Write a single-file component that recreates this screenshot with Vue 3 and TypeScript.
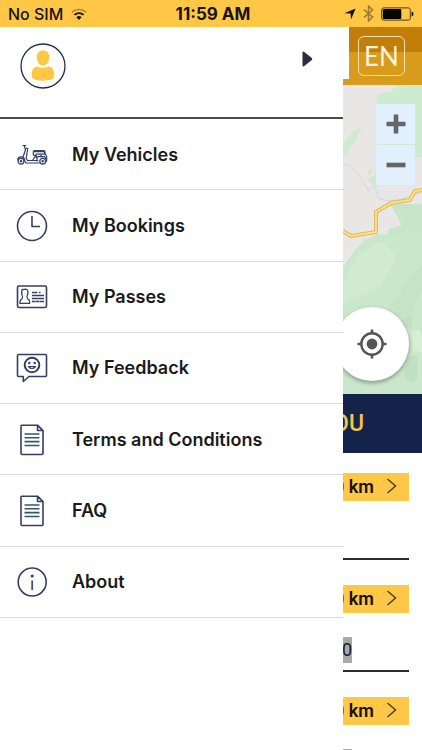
<script setup lang="ts">
type IconName = 'scooter' | 'clock' | 'pass' | 'feedback' | 'document' | 'info'

interface MenuItem {
  label: string
  icon: IconName
}

interface Place {
  distance: string
  count?: string
}

const menu: MenuItem[] = [
  { label: 'My Vehicles', icon: 'scooter' },
  { label: 'My Bookings', icon: 'clock' },
  { label: 'My Passes', icon: 'pass' },
  { label: 'My Feedback', icon: 'feedback' },
  { label: 'Terms and Conditions', icon: 'document' },
  { label: 'FAQ', icon: 'document' },
  { label: 'About', icon: 'info' },
]

const places: Place[] = [
  { distance: '0 km' },
  { distance: '0 km', count: '0' },
  { distance: '0 km', count: '0' },
]
</script>

<template>
  <div class="screen">
    <div class="status">
      <div class="status-side">
        <span class="carrier">No SIM</span>
        <svg class="wifi" viewBox="0 0 16 12" aria-hidden="true">
          <path d="M1 4.2a10.4 10.4 0 0 1 14 0" fill="none" stroke="#a98532" stroke-width="1.7" />
          <path d="M3.4 6.9a6.8 6.8 0 0 1 9.2 0" fill="none" stroke="#17130a" stroke-width="1.9" />
          <path d="M8 12 5.4 9.2a3.9 3.9 0 0 1 5.2 0z" fill="#17130a" />
        </svg>
      </div>
      <span class="time">11:59 AM</span>
      <div class="status-side status-right">
        <svg width="12" height="12" viewBox="0 0 12 12" aria-hidden="true">
          <path d="M11.6.4 7 11.4 6.6 5.6.4 5.2z" fill="#17130a" />
        </svg>
        <svg width="11" height="17" viewBox="0 0 11 17" aria-hidden="true">
          <path d="M1 4.6 9.6 12 5.5 16V1l4.1 4L1 12.4" fill="none" stroke="#9b7a2d" stroke-width="1.5" />
        </svg>
        <svg width="33" height="14" viewBox="0 0 33 14" aria-hidden="true">
          <rect x=".7" y=".9" width="28.6" height="12.2" rx="2" fill="none" stroke="#4a3a15" stroke-width="1" />
          <rect x="1.8" y="2" width="18.5" height="10" rx="1" fill="#080603" />
          <path d="M30.6 4.6q2 .5 2 2.4t-2 2.4z" fill="#17130a" />
        </svg>
      </div>
    </div>

    <div class="stage">
      <main class="page">
        <header class="topbar">
          <button class="lang" type="button">EN</button>
        </header>

        <section class="map" aria-label="Map">
          <svg class="map-art" viewBox="0 0 422 309" preserveAspectRatio="xMaxYMin slice" aria-hidden="true">
            <rect width="422" height="309" fill="#e9e7e5" />
            <path d="M376 16l4-8 10-1 8-7h24v101h-36l-14-6-5-8 9-7 1-16 10-14-2-13z" fill="#cdebd0" />
            <path d="M343 71v-13l11-12 8-4-7 13-9 16z" fill="#cfead1" />
            <path d="M376 76l46-4v60l-38-4-30 2-8-30 22-6z" fill="#e9e7e5" />
            <path d="M367 94l8-4 2-14 8 2 2 16-10 8z" fill="#cfe9d0" />
            <path d="M391 119h31v45h-26l-9-14 4-16z" fill="#c8e4c9" />
            <path d="M343 181l20-27 14-5 18 1 27-6v165h-79z" fill="#cae7cb" />
            <path d="M357 170l24-14 16 16-16 29-38 18v-20z" fill="#d0ebd1" />
            <path d="M396 212l26-34v26l-23 47-26-12z" fill="#c5e3c7" />
            <path d="M402 236q9-8 10-3v11l-10-2zM407 274q9-7 10 0v20q-9 8-13-4z" fill="#c1dfc3" />
            <path d="M412 247q9-5 10 4v17l-9-3zM345 252l14-11-2 22z" fill="#d5eed5" />
            <path d="M371 145l18-1 13-4-10-18-16 5z" fill="#e9e7e5" />
            <path d="M343 180q9-16 24-27l22-10" fill="none" stroke="#efeeee" stroke-width="1" />
            <path d="M343 80h6l8 7 10 16 2 3 5-6 5 14q14 4 28-2l15-5" fill="none" stroke="#c7dae5" stroke-width="1" />
            <path d="M343 146l8 5 25-4v-20l15-9 19-3 5-9 7-1" fill="none" stroke="#e5b85a" stroke-width="4" stroke-linejoin="round" />
            <path d="M343 146l8 5 25-4v-20l15-9 19-3 5-9 7-1" fill="none" stroke="#fbe184" stroke-width="2" stroke-linejoin="round" />
          </svg>
          <div class="map-controls">
            <div class="zoom">
              <button type="button" aria-label="Zoom in">
                <svg width="20" height="20" viewBox="0 0 20 20"><path d="M10 .5v19M.5 10h19" stroke="#646566" stroke-width="4.6" /></svg>
              </button>
              <button type="button" aria-label="Zoom out">
                <svg width="20" height="20" viewBox="0 0 20 20"><path d="M.5 10h19" stroke="#646566" stroke-width="4.6" /></svg>
              </button>
            </div>
            <button class="locate" type="button" aria-label="My location">
              <svg width="30" height="30" viewBox="0 0 30 30">
                <circle cx="15" cy="15" r="10.7" fill="none" stroke="#555" stroke-width="2.4" />
                <circle cx="15" cy="15" r="5.4" fill="#555" />
                <path d="M15 .5v4M15 25.5v4M.5 15h4M25.5 15h4" stroke="#555" stroke-width="2.6" />
              </svg>
            </button>
          </div>
        </section>

        <h2 class="banner">OU</h2>

        <ul class="places">
          <li v-for="(place, i) in places" :key="i" class="place">
            <a class="distance" href="#">
              {{ place.distance }}
              <svg width="11" height="16" viewBox="0 0 11 16" aria-hidden="true">
                <path d="M1.5 1l8 7-8 7" fill="none" stroke="#4b3d17" stroke-width="1.5" />
              </svg>
            </a>
            <span v-if="place.count" class="count">{{ place.count }}</span>
          </li>
        </ul>
      </main>

      <aside class="drawer">
        <div class="profile">
          <svg class="avatar" viewBox="0 0 46 46" aria-hidden="true">
            <circle cx="23" cy="23" r="22" fill="#fff" stroke="#252b50" stroke-width="1.3" />
            <path d="M23 7.5c4 0 6.200 2.700 6.200 6.800 0 4.400-2.300 8.200-6.200 8.200s-6.200-3.800-6.200-8.200c0-4.100 2.200-6.800 6.200-6.800z" fill="#fec744" />
            <path d="M17.500 23.200c3 2.300 8 2.300 11 0 4 .8 5.800 4 5.800 8.300 0 2.300-.5 3.700-1.700 4.500-3.800 2.200-15.400 2.200-19.200 0-1.200-.8-1.700-2.200-1.700-4.500 0-4.300 1.800-7.500 5.800-8.300z" fill="#fec744" />
          </svg>
          <button class="expand" type="button" aria-label="Open profile">
            <svg width="11" height="16" viewBox="0 0 11 16">
              <path d="M.5 1.5Q.5 0 2 .8L9.800 7q1 1 0 2L2 15.200Q.5 16 .5 14.500z" fill="#2b2d40" />
            </svg>
          </button>
        </div>

        <nav class="menu">
          <a v-for="item in menu" :key="item.label" class="menu-item" href="#">
            <svg class="icon" viewBox="0 0 32 32" aria-hidden="true">
              <g v-if="item.icon === 'scooter'" stroke-width="1.2">
                <path d="M6.500 6.500h3.600M8.200 6.500l1.300 4.200-2.700 8.100" />
                <path d="M9.700 9l2 .6-1.500 9.700 1.300 2.200h5l3-4.800-2.200-.8V12.700h11.400v2.500h-8.600v3.100l2.500-.7h6l2.200 3.400-.8 2" />
                <path d="M7.500 19.500l2.500 4.500h13.700M1.700 21.500q-.3-4 4.300-3.700 2.200.5 3 3M17.500 11.700h10.600l1.300 1.800" />
                <path d="M24.500 15.500l1 2M21 18v4.500M28 12.500l2.700 5v3M16.800 21.500h5.500" />
                <circle cx="5" cy="22.3" r="2.9" /><circle cx="26.7" cy="22.3" r="2.9" />
                <circle cx="5" cy="22.3" r=".7" /><circle cx="26.7" cy="22.3" r=".7" />
              </g>
              <g v-else-if="item.icon === 'clock'">
                <circle cx="16" cy="16" r="14.5" />
                <path d="M16 6v10.500h8" />
              </g>
              <g v-else-if="item.icon === 'pass'">
                <rect x="1.5" y="5" width="29" height="21.5" rx="1.5" />
                <path d="M6 9.500q-.4-1.500 1-.8 4.500-1.500 5 1.800.2 1.800-.8 4-1 2 .5 3.300 2 .8 2 3.500v1H3.900v-1q0-2.700 2.100-3.500 1.300-1.300.2-3.300-1-3-.2-5z" stroke-width="1.3" />
                <path d="M16 11.500h5.500M23 11.500h1.500M16 14.500h12M16 17.500h12M16 20.500h12" stroke-width="1.3" />
                <path d="M19.500 20.500h.6M23.500 20.500h.6" stroke="#fff" />
              </g>
              <g v-else-if="item.icon === 'feedback'">
                <path d="M2.500 2.500h27q1 0 1 1v20q0 1-1 1H13l-5.700 5v-5H2.500q-1 0-1-1v-20q0-1 1-1z" />
                <circle cx="16" cy="13" r="7.3" stroke-width="2" />
                <circle cx="13.3" cy="11" r=".5" /><circle cx="18.7" cy="11" r=".5" />
                <path d="M12.500 14.500q3.500 4 7 0z" stroke-width="1.2" />
              </g>
              <g v-else-if="item.icon === 'document'">
                <path d="M5.500 1.300h16.300l5.200 5.200v23q0 1-1 1H6q-1 0-1-1V2.300q0-1 .5-1zM21.500 1.500v5h5.300z" />
                <path d="M8.500 10h15M8.500 13.800h15M8.500 17.600h15M8.500 21.500h15" stroke="#36566f" />
              </g>
              <g v-else>
                <circle cx="16.2" cy="16" r="14" />
                <path d="M16.200 14.500V24" stroke="#3d5272" stroke-width="1.8" />
                <circle cx="16.2" cy="10" r=".8" />
              </g>
            </svg>
            <span>{{ item.label }}</span>
          </a>
        </nav>
      </aside>
    </div>
  </div>
</template>

<style>
body {
  margin: 0;
  background: #fff;
}
</style>

<style scoped>
.screen {
  display: flex;
  flex-direction: column;
  height: 100vh;
  overflow: hidden;
  background: #fff;
  color: #1a1a1c;
  font-family: Inter, Roboto, "Liberation Sans", sans-serif;
}

button {
  margin: 0;
  padding: 0;
  border: 0;
  cursor: pointer;
}

a {
  color: inherit;
  text-decoration: none;
}

svg {
  display: block;
  flex: none;
}

.status {
  display: grid;
  grid-template-columns: 1fr auto 1fr;
  align-items: center;
  flex: none;
  box-sizing: border-box;
  height: 27px;
  padding: 0 8px;
  background: #fec846;
  color: #17130a;
  font-size: 16px;
  line-height: 20px;
}

.status-side {
  display: flex;
  align-items: center;
  gap: 8px;
}

.carrier {
  font-weight: 500;
}

.wifi {
  width: 16px;
  height: 12px;
}

.status-right {
  gap: 7px;
  justify-content: flex-end;
}

.time {
  padding-left: 4px;
  font-size: 17px;
  font-weight: 700;
}

.stage {
  position: relative;
  flex: 1;
  min-height: 0;
}

.topbar {
  display: flex;
  align-items: center;
  justify-content: flex-end;
  box-sizing: border-box;
  height: 58px;
  padding-right: 17px;
  background: linear-gradient(#c17e08 0 25px, #d89b1b 25px);
}

.lang {
  width: 47px;
  height: 40px;
  border: 1px solid #f2dfb4;
  border-radius: 6px;
  background: transparent;
  color: #fbf3df;
  font-family: Lato, sans-serif;
  font-size: 26px;
  font-weight: 400;
  line-height: 36px;
}

.map {
  display: grid;
  height: 309px;
}

.map-art {
  grid-area: 1 / 1;
  width: 100%;
  height: 309px;
}

.map-controls {
  display: flex;
  flex-direction: column;
  align-items: flex-end;
  justify-content: space-between;
  grid-area: 1 / 1;
  padding: 19px 0 13px;
}

.zoom {
  display: grid;
  gap: 1px;
  margin-right: 7px;
}

.zoom button {
  display: grid;
  place-items: center;
  width: 39px;
  height: 40px;
  background: #e2effc;
}

.locate {
  display: grid;
  place-items: center;
  width: 74px;
  height: 74px;
  margin-right: 13px;
  border-radius: 50%;
  background: #fff;
  box-shadow: 0 2px 4px rgba(0, 0, 0, 0.35);
}

.banner {
  box-sizing: border-box;
  height: 59px;
  margin: 0;
  padding-right: 58px;
  background: #14234a;
  color: #f5c44b;
  font-family: Roboto, sans-serif;
  font-size: 23px;
  font-weight: 500;
  line-height: 60px;
  text-align: right;
}

.places {
  margin: 0;
  padding: 20px 13px 0;
  list-style: none;
}

.place {
  display: flex;
  flex-direction: column;
  align-items: flex-end;
  gap: 24px;
  box-sizing: border-box;
  height: 87px;
  margin-bottom: 25px;
  border-bottom: 2px solid #2b2b2b;
}

.distance {
  display: flex;
  align-items: center;
  gap: 12px;
  box-sizing: border-box;
  height: 28px;
  padding: 0 12px 2px;
  background: #fec846;
  color: #17130a;
  font-family: Roboto, sans-serif;
  font-size: 18px;
  font-weight: 600;
}

.count {
  margin-right: 57px;
  padding-left: 8px;
  background: #a9a9a9;
  font-family: Roboto, sans-serif;
  font-size: 18px;
  line-height: 26px;
}

.drawer {
  position: absolute;
  inset: 0 79px 0 0;
  z-index: 1;
  background: #fff;
}

.profile {
  display: flex;
  align-items: flex-start;
  justify-content: space-between;
  box-sizing: border-box;
  height: 92px;
  padding: 16px 30px 0 20px;
  border-bottom: 2px solid #4c4c4e;
}

/* The drawer head overlaps the top bar slightly past the drawer edge. */
.profile::after {
  content: "";
  position: absolute;
  top: 0;
  left: 100%;
  width: 6px;
  height: 52px;
  background: #fff;
}

.avatar {
  width: 46px;
  height: 46px;
}

.expand {
  margin-top: 8px;
  background: transparent;
}

.menu {
  display: grid;
  grid-template-rows: repeat(7, 1fr);
  height: 499px;
}

.menu-item {
  display: flex;
  align-items: center;
  gap: 24px;
  padding: 1px 16px 0;
  border-bottom: 1px solid #d9d9db;
  font-size: 18px;
  font-weight: 600;
  line-height: 24px;
}

.icon {
  width: 32px;
  height: 32px;
  fill: none;
  stroke: #353f66;
  stroke-width: 1.6;
  stroke-linejoin: round;
}
</style>
